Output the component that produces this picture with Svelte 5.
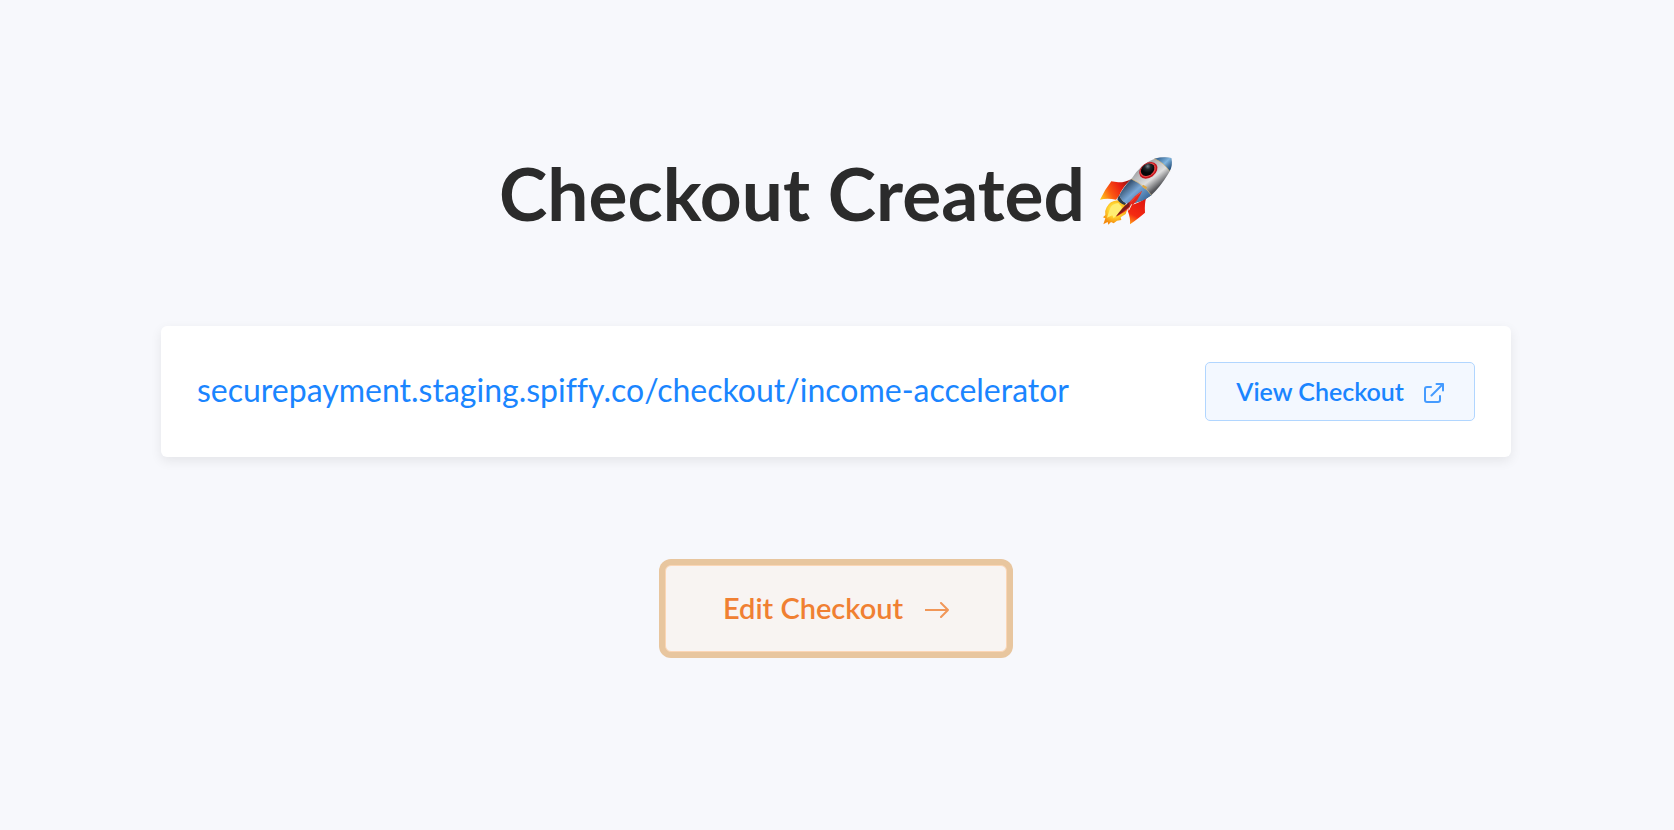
<script lang="ts">
	const checkoutUrl = 'securepayment.staging.spiffy.co/checkout/income-accelerator';
</script>

<main class="created">
	<h1 class="title">
		Checkout Created
		<svg class="rocket" viewBox="24 33 222 210" role="img" aria-label="Rocket">
			<defs>
				<linearGradient id="hull" x1="135" y1="65" x2="190" y2="135" gradientUnits="userSpaceOnUse">
					<stop offset="0" stop-color="#8f9092" />
					<stop offset="0.3" stop-color="#b9babc" />
					<stop offset="0.65" stop-color="#dedede" />
					<stop offset="1" stop-color="#55565a" />
				</linearGradient>
				<linearGradient id="band" x1="110" y1="115" x2="165" y2="175" gradientUnits="userSpaceOnUse">
					<stop offset="0" stop-color="#34506e" />
					<stop offset="0.4" stop-color="#79a7d6" />
					<stop offset="1" stop-color="#2f5f92" />
				</linearGradient>
				<linearGradient id="nose" x1="205" y1="38" x2="238" y2="72" gradientUnits="userSpaceOnUse">
					<stop offset="0" stop-color="#3d6c9b" />
					<stop offset="0.5" stop-color="#80b5df" />
					<stop offset="1" stop-color="#234e7b" />
				</linearGradient>
				<linearGradient id="fin-left" x1="30" y1="160" x2="112" y2="112" gradientUnits="userSpaceOnUse">
					<stop offset="0" stop-color="#ffc51b" />
					<stop offset="0.35" stop-color="#fb5a12" />
					<stop offset="0.7" stop-color="#ea2112" />
					<stop offset="1" stop-color="#9b1712" />
				</linearGradient>
				<linearGradient id="fin-right" x1="120" y1="235" x2="160" y2="160" gradientUnits="userSpaceOnUse">
					<stop offset="0" stop-color="#ff9318" />
					<stop offset="0.3" stop-color="#f42b12" />
					<stop offset="1" stop-color="#df1510" />
				</linearGradient>
				<radialGradient id="flame" cx="72" cy="195" r="42" gradientUnits="userSpaceOnUse">
					<stop offset="0" stop-color="#fff58a" />
					<stop offset="0.5" stop-color="#ffd22e" />
					<stop offset="1" stop-color="#f58a0c" />
				</radialGradient>
				<radialGradient id="glass" cx="176" cy="66" r="20" gradientUnits="userSpaceOnUse">
					<stop offset="0" stop-color="#74818a" />
					<stop offset="0.45" stop-color="#20262b" />
					<stop offset="1" stop-color="#050708" />
				</radialGradient>
			</defs>
			<path fill="url(#fin-left)" d="M121 102Q100 113 82 112Q70 110 61 109Q42 133 27 164Q49 158 75 164L86 150Q90 132 121 102Z" />
			<path fill="url(#fin-right)" d="M166 158Q160 174 162 203Q145 218 117 238Q119 219 110 197L119 180Q144 175 166 158Z" />
			<path fill="url(#flame)" d="M80 166Q56 168 47 187Q40 198 43 210L36 217L43 220L37 238L50 231L52 239L60 231L68 235L78 227L91 225L89 217L104 207L110 190L103 176Z" />
			<path fill="#ffee72" d="M82 174Q61 176 56 194L48 218L64 211L68 220L80 207L91 201L92 186Z" />
			<path fill="#2b3b4b" d="M84 151L108 171L101 180Q86 176 79 163Z" />
			<path fill="url(#hull)" d="M121 102Q151 54 196 39Q220 35 241 39Q247 63 231 88Q207 127 181 151Q153 173 111 177Q91 170 85 151Q95 130 121 102Z" />
			<path fill="url(#band)" d="M121 102Q142 111 158 128Q173 139 181 151Q153 173 111 177Q91 170 85 151Q95 130 121 102Z" />
			<path fill="url(#nose)" d="M190 41Q220 34 241 39Q246 61 236 79Q219 53 190 41Z" />
			<path fill="none" stroke="#dbb76c" stroke-width="2" d="M190 41Q220 54 236 79M121 102Q161 120 181 151" />
			<path fill="#dba645" d="M156 119L169 127L164 133L153 125Z" />
			<ellipse cx="172" cy="76" rx="30" ry="22" transform="rotate(-36 172 76)" fill="#c5141c" />
			<ellipse cx="171" cy="75" rx="26" ry="19" transform="rotate(-36 171 75)" fill="#e64a48" />
			<ellipse cx="170" cy="74" rx="22" ry="17" transform="rotate(-36 170 74)" fill="url(#glass)" />
			<path fill="#e3291d" d="M153 137Q133 150 116 170Q94 189 76 215Q101 203 118 186Q143 166 153 137Z" />
			<path fill="#7d1a1b" d="M115 171Q94 187 74 215Q98 201 116 184Z" />
			<path fill="none" stroke="#f7edd9" stroke-width="3" d="M122 178L113 196" />
			<path fill="none" stroke="#f05242" stroke-width="3" d="M151 141Q134 153 120 170" />
		</svg>
	</h1>

	<section class="card">
		<a class="url" href="https://{checkoutUrl}">{checkoutUrl}</a>
		<button type="button" class="btn view">
			View Checkout
			<svg class="external" viewBox="0 0 20 20" aria-hidden="true">
				<path d="M7 4H3Q1 4 1 6V17Q1 19 3 19H14Q16 19 16 17V13" />
				<path d="M7.500 12.500L19 1M12.500 1H19V7.500" />
			</svg>
		</button>
	</section>

	<button type="button" class="btn edit">
		Edit Checkout
		<svg class="arrow" viewBox="0 0 24 16" aria-hidden="true">
			<path d="M0.500 8H23M16 1L23 8L16 15" />
		</svg>
	</button>
</main>

<style>
	:global(body) {
		margin: 0;
		background: #f7f8fc;
	}

	.created {
		display: flex;
		flex-direction: column;
		align-items: center;
		box-sizing: border-box;
		min-height: 100vh;
		padding: 148px 163px 100px 161px;
		background: #f7f8fc;
		font-family: Lato, sans-serif;
		font-variant-ligatures: none;
	}

	.title {
		display: flex;
		align-items: center;
		gap: 14px;
		margin: 0 0 88px;
		color: #2b2b2b;
		font-size: 73px;
		font-weight: 700;
		line-height: 90px;
	}

	.rocket {
		width: 74px;
		height: 70px;
		flex-shrink: 0;
		margin-bottom: 4px;
	}

	.card {
		display: flex;
		align-items: center;
		justify-content: space-between;
		gap: 24px;
		box-sizing: border-box;
		width: 100%;
		padding: 36px;
		border-radius: 6px;
		background: #fff;
		box-shadow: 0 4px 12px rgba(0, 0, 0, 0.08);
	}

	.url {
		margin-bottom: 4px;
		color: #1a85ff;
		font-size: 32px;
		line-height: 40px;
		text-decoration: none;
	}

	.btn {
		display: flex;
		align-items: center;
		font-family: inherit;
		font-weight: 600;
		white-space: nowrap;
		cursor: pointer;
	}

	.btn svg {
		flex-shrink: 0;
		fill: none;
		stroke: currentColor;
		stroke-linecap: round;
		stroke-linejoin: round;
		opacity: 0.8;
	}

	.view {
		gap: 20px;
		padding: 12px 30px 13px;
		border: 1px solid #b1d6ff;
		border-radius: 5px;
		background: #f3f8ff;
		color: #1a85ff;
		font-size: 25px;
		line-height: 32px;
	}

	.external {
		width: 20px;
		height: 20px;
		margin-top: 4px;
		stroke-width: 2;
	}

	.edit {
		gap: 22px;
		margin-top: 108px;
		padding: 24px 57px 25px;
		border: 1px solid #fbd6b6;
		border-radius: 6px;
		background: #f8f4f2;
		box-shadow: 0 0 0 6px #e8c69f;
		color: #f08032;
		font-size: 29px;
		line-height: 36px;
	}

	.arrow {
		width: 24px;
		height: 16px;
		margin-top: 4px;
		stroke-width: 2;
	}
</style>
